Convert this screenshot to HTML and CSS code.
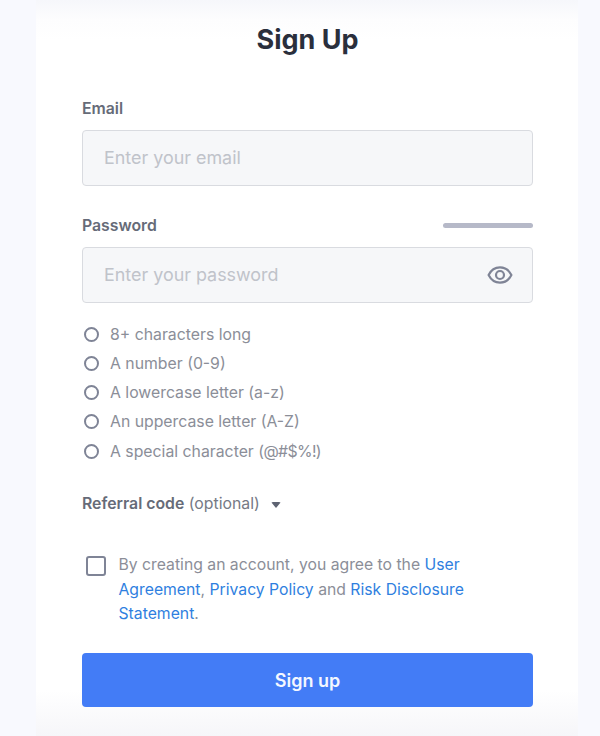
FILE: index.html
```html
<!DOCTYPE html>
<html lang="en">
<head>
<meta charset="utf-8">
<title>Sign Up</title>
<link rel="stylesheet" href="styles.css">
</head>
<body>
<main class="card">
  <h1 class="title">Sign Up</h1>
  <form class="form">
    <div class="label-row"><label class="label">Email</label></div>
    <div class="field"><span class="placeholder">Enter your email</span></div>
    <div class="label-row label-row-pw">
      <label class="label">Password</label>
      <span class="strength"></span>
    </div>
    <div class="field">
      <span class="placeholder">Enter your password</span>
      <svg class="eye" width="26" height="20" viewBox="0 0 26 20" fill="none" stroke="#7f8496" stroke-width="2.2">
        <path d="M1.6 10C4 5.2 8.2 2.4 13 2.4S22 5.2 24.4 10C22 14.800 17.800 17.600 13 17.600S4 14.800 1.600 10Z" stroke-linejoin="round"/>
        <circle cx="13" cy="10" r="4"/>
      </svg>
    </div>
    <ul class="rules">
      <li class="rule"><span class="dot"></span><span>8+ characters long</span></li>
      <li class="rule"><span class="dot"></span><span>A number (0-9)</span></li>
      <li class="rule"><span class="dot"></span><span>A lowercase letter (a-z)</span></li>
      <li class="rule"><span class="dot"></span><span>An uppercase letter (A-Z)</span></li>
      <li class="rule"><span class="dot"></span><span>A special character <span class="symbols">(@#$%!)</span></span></li>
    </ul>
    <div class="referral"><b class="referral-b">Referral code</b> (optional)<span class="caret"></span></div>
    <div class="agree">
      <span class="check"></span>
      <p class="agree-text">By creating an account, you agree to the <a class="link">User Agreement</a>, <a class="link">Privacy Policy</a> and <a class="link">Risk Disclosure Statement</a>.</p>
    </div>
    <button class="submit" type="button">Sign up</button>
  </form>
</main>
</body>
</html>
```
FILE: styles.css
```css
* { box-sizing: border-box; }
html, body { margin: 0; height: 100%; }
body {
  background: #f8f9fe;
  font-family: Inter, "Liberation Sans", sans-serif;
  overflow: hidden;
}
.card {
  margin-left: 36px;
  width: 542px;
  height: 736px;
  padding: 0 45px 0 46px;
  background: linear-gradient(#f6f7fb 0, #fdfdfe 20px, #ffffff 40px, #ffffff 690px, #f6f6f9 736px);
}
.title {
  margin: 0;
  padding-top: 22px;
  height: 62px;
  font-size: 27px;
  line-height: 35px;
  font-weight: 700;
  color: #2a2f3c;
  text-align: center;
}
.form { display: block; }
.label-row {
  display: flex;
  justify-content: space-between;
  align-items: center;
  margin-top: 36px;
  height: 20px;
}
.label-row-pw { margin-top: 29px; }
.label { font-size: 15.8px; font-weight: 600; color: #666b78; }
.strength { width: 90px; height: 5px; border-radius: 3px; background: #b6b9c8; }
.field {
  display: flex;
  justify-content: space-between;
  align-items: center;
  height: 56px;
  margin-top: 12px;
  padding: 0 19px 2px 21px;
  background: #f6f7f9;
  border: 1px solid #d9dbe0;
  border-radius: 4px;
}
.placeholder { font-size: 17.9px; color: #c0c3ca; }
.eye { display: block; margin-top: 2px; }
.rules { list-style: none; margin: 16.5px 0 0; padding: 0; }
.rule {
  display: flex;
  align-items: center;
  gap: 11.5px;
  height: 29.25px;
  font-size: 15.8px;
  color: #8b8e98;
}
.symbols { letter-spacing: -0.6px; }
.dot {
  width: 15px;
  height: 15px;
  margin-left: 1.5px;
  border: 2px solid #7f8496;
  border-radius: 50%;
}
.referral {
  display: flex;
  align-items: center;
  margin-top: 26px;
  height: 24px;
  font-size: 15.8px;
  color: #757985;
  white-space: pre;
}
.referral-b { font-weight: 600; color: #666b78; }
.caret {
  margin-left: 11px;
  margin-top: 3px;
  border-left: 5.5px solid transparent;
  border-right: 5.5px solid transparent;
  border-top: 6px solid #5e6372;
  border-radius: 2px;
}
.agree { display: flex; margin-top: 37px; }
.check {
  flex: none;
  width: 20px;
  height: 20px;
  margin: 3px 12.5px 0 4px;
  border: 2.5px solid #7f8496;
  border-radius: 3px;
}
.agree-text {
  margin: 0;
  width: 355px;
  font-size: 15.75px;
  line-height: 24.75px;
  color: #8b8e98;
}
.link { color: #2f7fe0; }
.submit {
  display: block;
  width: 100%;
  height: 54px;
  margin-top: 26px;
  border: 0;
  border-radius: 4px;
  background: #437cf6;
  color: #f4f7ff;
  font: 600 18px Inter, "Liberation Sans", sans-serif;
}
```
